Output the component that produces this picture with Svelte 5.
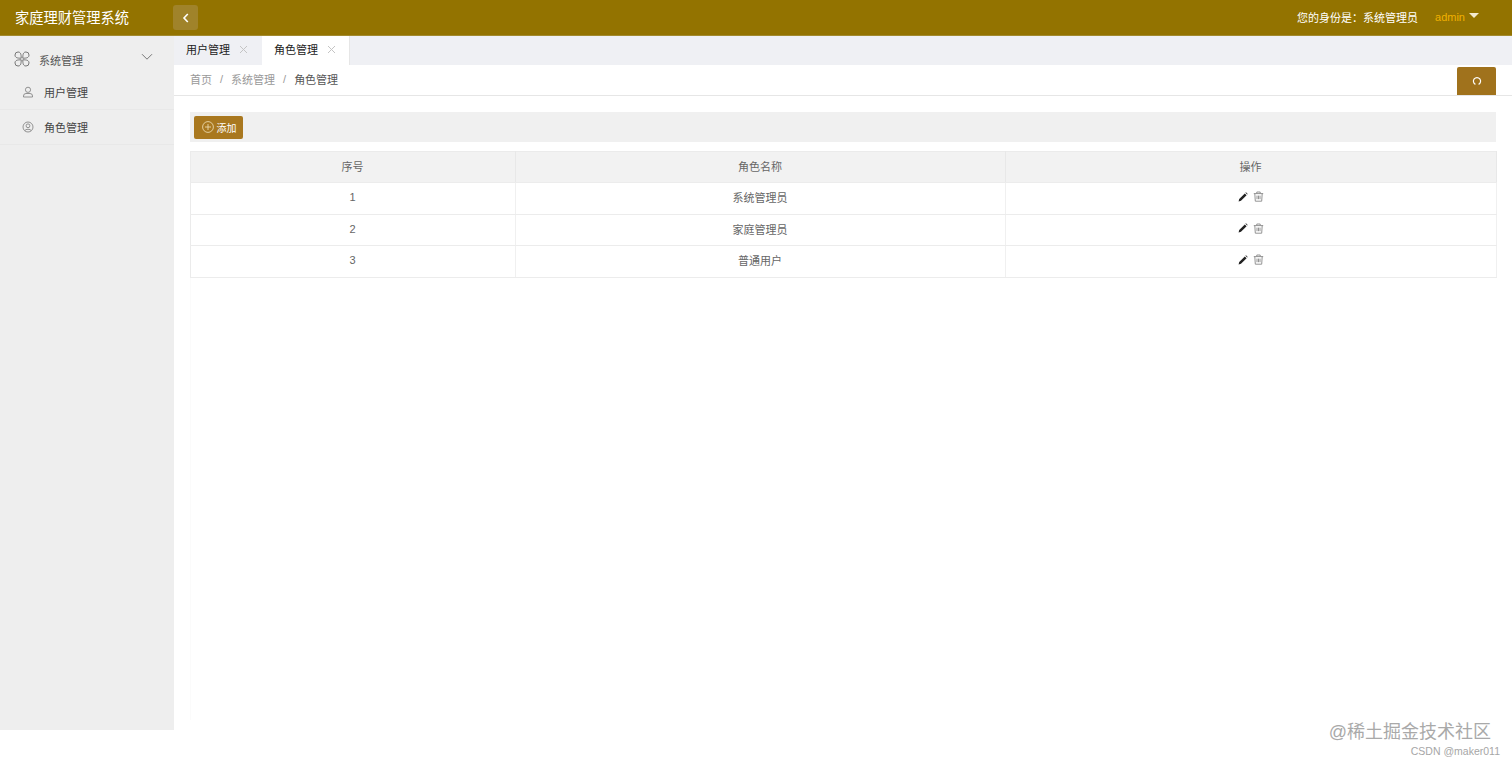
<script>
  const roles = [
    { id: 1, name: '系统管理员' },
    { id: 2, name: '家庭管理员' },
    { id: 3, name: '普通用户' }
  ];
</script>

<div class="frame">
  <header class="topbar">
    <div class="brand">家庭理财管理系统</div>
    <button class="collapse" aria-label="收起">
      <svg width="12" height="12" viewBox="0 0 12 12"><path d="M7.8 2 L4 6 L7.8 10" fill="none" stroke="#fff" stroke-width="1.6"/></svg>
    </button>
    <div class="user">
      <span class="identity">您的身份是：系统管理员</span>
      <span class="admin">admin</span>
      <span class="caret"></span>
    </div>
  </header>

  <div class="body">
    <aside class="side">
      <div class="group">
        <svg class="clover" width="16" height="16" viewBox="0 0 16 16" fill="none" stroke="#777" stroke-width="1">
          <path d="M7.2 7.2 C3.5 7.2 1 6.8 1 4 A3 3 0 0 1 4 1 C6.8 1 7.2 3.5 7.2 7.2 Z"/>
          <path d="M8.8 7.2 C12.5 7.2 15 6.8 15 4 A3 3 0 0 0 12 1 C9.2 1 8.8 3.5 8.8 7.2 Z"/>
          <path d="M7.2 8.8 C3.5 8.8 1 9.2 1 12 A3 3 0 0 0 4 15 C6.8 15 7.2 12.5 7.2 8.8 Z"/>
          <path d="M8.8 8.8 C12.5 8.8 15 9.2 15 12 A3 3 0 0 1 12 15 C9.2 15 8.8 12.5 8.8 8.8 Z"/>
        </svg>
        <span>系统管理</span>
        <svg class="chev" width="12" height="8" viewBox="0 0 12 8"><path d="M1 1.2 L6 6.2 L11 1.2" fill="none" stroke="#777" stroke-width="1"/></svg>
      </div>
      <div class="item">
        <svg width="12" height="12" viewBox="0 0 12 12" fill="none" stroke="#888" stroke-width="0.9"><circle cx="6" cy="3.8" r="2.6"/><path d="M1.5 11 V10 a2.5 2.5 0 0 1 2.5 -2.5 H8 a2.5 2.5 0 0 1 2.5 2.5 V11 Z"/></svg>
        <span>用户管理</span>
      </div>
      <div class="item">
        <svg width="12" height="12" viewBox="0 0 12 12" fill="none" stroke="#888" stroke-width="0.9"><circle cx="6" cy="6" r="5"/><circle cx="6" cy="4.8" r="1.9"/><path d="M2.8 9.6 C3.6 7.8 8.4 7.8 9.2 9.6"/></svg>
        <span>角色管理</span>
      </div>
    </aside>

    <main class="main">
      <nav class="tabs">
        <div class="tab">
          <span>用户管理</span>
          <svg class="x" width="9" height="9" viewBox="0 0 9 9"><path d="M1 1 L8 8 M8 1 L1 8" stroke="#c4c4c4" stroke-width="1"/></svg>
        </div>
        <div class="tab active">
          <span>角色管理</span>
          <svg class="x" width="9" height="9" viewBox="0 0 9 9"><path d="M1 1 L8 8 M8 1 L1 8" stroke="#c4c4c4" stroke-width="1"/></svg>
        </div>
      </nav>

      <div class="crumbs">
        <span class="muted">首页</span><i>/</i>
        <span class="muted">系统管理</span><i>/</i>
        <span class="current">角色管理</span>
        <button class="refresh" aria-label="刷新">
          <svg width="10" height="10" viewBox="0 0 10 10"><path d="M3.4 8.4 A3.6 3.6 0 1 1 6.6 8.4" fill="none" stroke="#fff" stroke-width="1.2"/></svg>
        </button>
      </div>

      <section class="content">
        <div class="toolbar">
          <button class="add">
            <svg width="12" height="12" viewBox="0 0 12 12" fill="none" stroke="#f3e3bd" stroke-width="0.8"><circle cx="6" cy="6" r="5.4"/><path d="M6 3 V9 M3 6 H9"/></svg>
            <span>添加</span>
          </button>
        </div>

        <div class="grid">
          <table>
            <colgroup><col class="c1" /><col class="c2" /><col class="c3" /></colgroup>
            <thead>
              <tr><th>序号</th><th>角色名称</th><th>操作</th></tr>
            </thead>
            <tbody>
              {#each roles as r}
                <tr>
                  <td>{r.id}</td>
                  <td>{r.name}</td>
                  <td>
                    <span class="ops">
                      <svg width="10" height="10" viewBox="0 0 10 10"><path d="M0.6 9.4 L1.2 7 L6.8 1.4 L8.6 3.2 L3 8.8 Z M7.4 0.8 L8 0.3 L9.7 2 L9.2 2.6 Z" fill="#222"/></svg>
                      <svg width="11" height="11" viewBox="0 0 11 11" fill="none" stroke="#888" stroke-width="0.9"><path d="M0.8 2.6 H10.2 M3.8 2.4 V1 H7.2 V2.4 M1.8 2.6 L2.3 10.2 H8.7 L9.2 2.6 M4 4.6 V8.2 M5.5 4.6 V8.2 M7 4.6 V8.2"/></svg>
                    </span>
                  </td>
                </tr>
              {/each}
            </tbody>
          </table>
        </div>
      </section>
    </main>
  </div>

  <div class="mark1">@稀土掘金技术社区</div>
  <div class="mark2">CSDN @maker011</div>
</div>

<style>
  :global(body) {
    margin: 0;
    background: #fff;
  }
  .frame {
    position: relative;
    height: 763px;
    overflow: hidden;
    font-family: "Liberation Sans", "Noto Sans CJK SC", sans-serif;
    font-size: 11px;
    color: #555;
  }
  button {
    border: 0;
    padding: 0;
    font: inherit;
  }
  .topbar {
    height: 36px;
    background: #937300;
    display: flex;
    align-items: center;
    border-bottom: 1px solid #a28a2e;
    box-sizing: border-box;
  }
  .brand {
    width: 173px;
    box-sizing: border-box;
    padding: 0 0 3px 15px;
    font-size: 14.25px;
    color: #fff;
  }
  .collapse {
    width: 25px;
    height: 25px;
    background: #a0832a;
    border-radius: 3px;
    display: flex;
    align-items: center;
    justify-content: center;
  }
  .user {
    margin-left: auto;
    display: flex;
    align-items: center;
    padding: 0 33px 2px 0;
    font-size: 11px;
    color: #fff;
  }
  .admin {
    margin-left: 17px;
    color: #f0b000;
  }
  .caret {
    margin: -3px 0 0 4px;
    border-left: 5px solid transparent;
    border-right: 5px solid transparent;
    border-top: 5px solid #f3ead0;
  }
  .body {
    display: flex;
    height: 694px;
  }
  .side {
    width: 174px;
    flex: none;
    background: #eee;
  }
  .group {
    height: 39px;
    box-sizing: border-box;
    display: flex;
    align-items: center;
    padding: 8px 21px 0 14px;
    color: #555;
  }
  .group span {
    margin: 1px 0 0 9px;
  }
  .clover {
    margin-top: -2px;
  }
  .chev {
    margin: -5px 0 0 auto;
  }
  .item {
    height: 35px;
    box-sizing: border-box;
    display: flex;
    align-items: center;
    padding-left: 22px;
    gap: 10px;
    color: #444;
    border-bottom: 1px solid #e8e8e8;
  }
  .main {
    flex: 1;
    min-width: 0;
    display: flex;
    flex-direction: column;
  }
  .tabs {
    height: 29px;
    background: #eff0f4;
    display: flex;
  }
  .tab {
    width: 88px;
    box-sizing: border-box;
    display: flex;
    align-items: center;
    padding: 0 0 3px 12px;
    gap: 9px;
    color: #222;
  }
  .tab.active {
    background: #fff;
    border-right: 1px solid #e6e6e6;
  }
  .crumbs {
    height: 31px;
    box-sizing: border-box;
    display: flex;
    align-items: center;
    padding: 0 0 0 16px;
    border-bottom: 1px solid #e6e6e6;
  }
  .crumbs > span {
    margin-bottom: 2px;
  }
  .crumbs i {
    font-style: normal;
    color: #999;
    margin: 0 8px 2px;
  }
  .muted {
    color: #999;
  }
  .current {
    color: #555;
  }
  .refresh {
    margin: 2px 16px 0 auto;
    width: 39px;
    height: 28px;
    align-self: flex-start;
    background: #a0721c;
    border-radius: 2px 2px 0 0;
    display: flex;
    align-items: center;
    justify-content: center;
  }
  .content {
    flex: 1;
    padding: 16px 16px 0;
    border-left: 1px solid transparent;
  }
  .toolbar {
    height: 30px;
    background: #f0f0f0;
    display: flex;
    align-items: center;
    padding-left: 4px;
    margin-left: -1px;
  }
  .add {
    width: 49px;
    height: 23px;
    padding-left: 1px;
    background: #a9781f;
    color: #fff;
    border-radius: 2px;
    font-size: 10px;
    display: flex;
    align-items: center;
    justify-content: center;
    gap: 3px;
  }
  .grid {
    height: 569px;
    margin: 9px 0 0 -1px;
    border-left: 1px solid #fbfbfb;
  }
  table {
    width: 1306px;
    margin-left: -1px;
    border-collapse: collapse;
    table-layout: fixed;
    border: 1px solid #ebebeb;
  }
  .c1 { width: 325px; }
  .c2 { width: 490px; }
  .c3 { width: 491px; }
  th, td {
    font-weight: 400;
    font-size: 11px;
    text-align: center;
    padding: 0 1px 2px 0;
    border-right: 1px solid #f0f0f0;
    border-bottom: 1px solid #ececec;
  }
  th {
    height: 28px;
    background: #f2f2f2;
    color: #666;
    border-right-color: #e8e8e8;
  }
  td {
    height: 28.5px;
    color: #666;
  }
  .ops {
    display: inline-flex;
    gap: 5px;
    align-items: center;
    vertical-align: 0;
  }
  .mark1 {
    position: absolute;
    right: 21px;
    top: 720px;
    font-size: 18px;
    line-height: 24px;
    color: #a9a9a9;
  }
  .mark2 {
    position: absolute;
    right: 12px;
    top: 744px;
    font-size: 10.5px;
    line-height: 14px;
    color: #a6a6a6;
  }
</style>
